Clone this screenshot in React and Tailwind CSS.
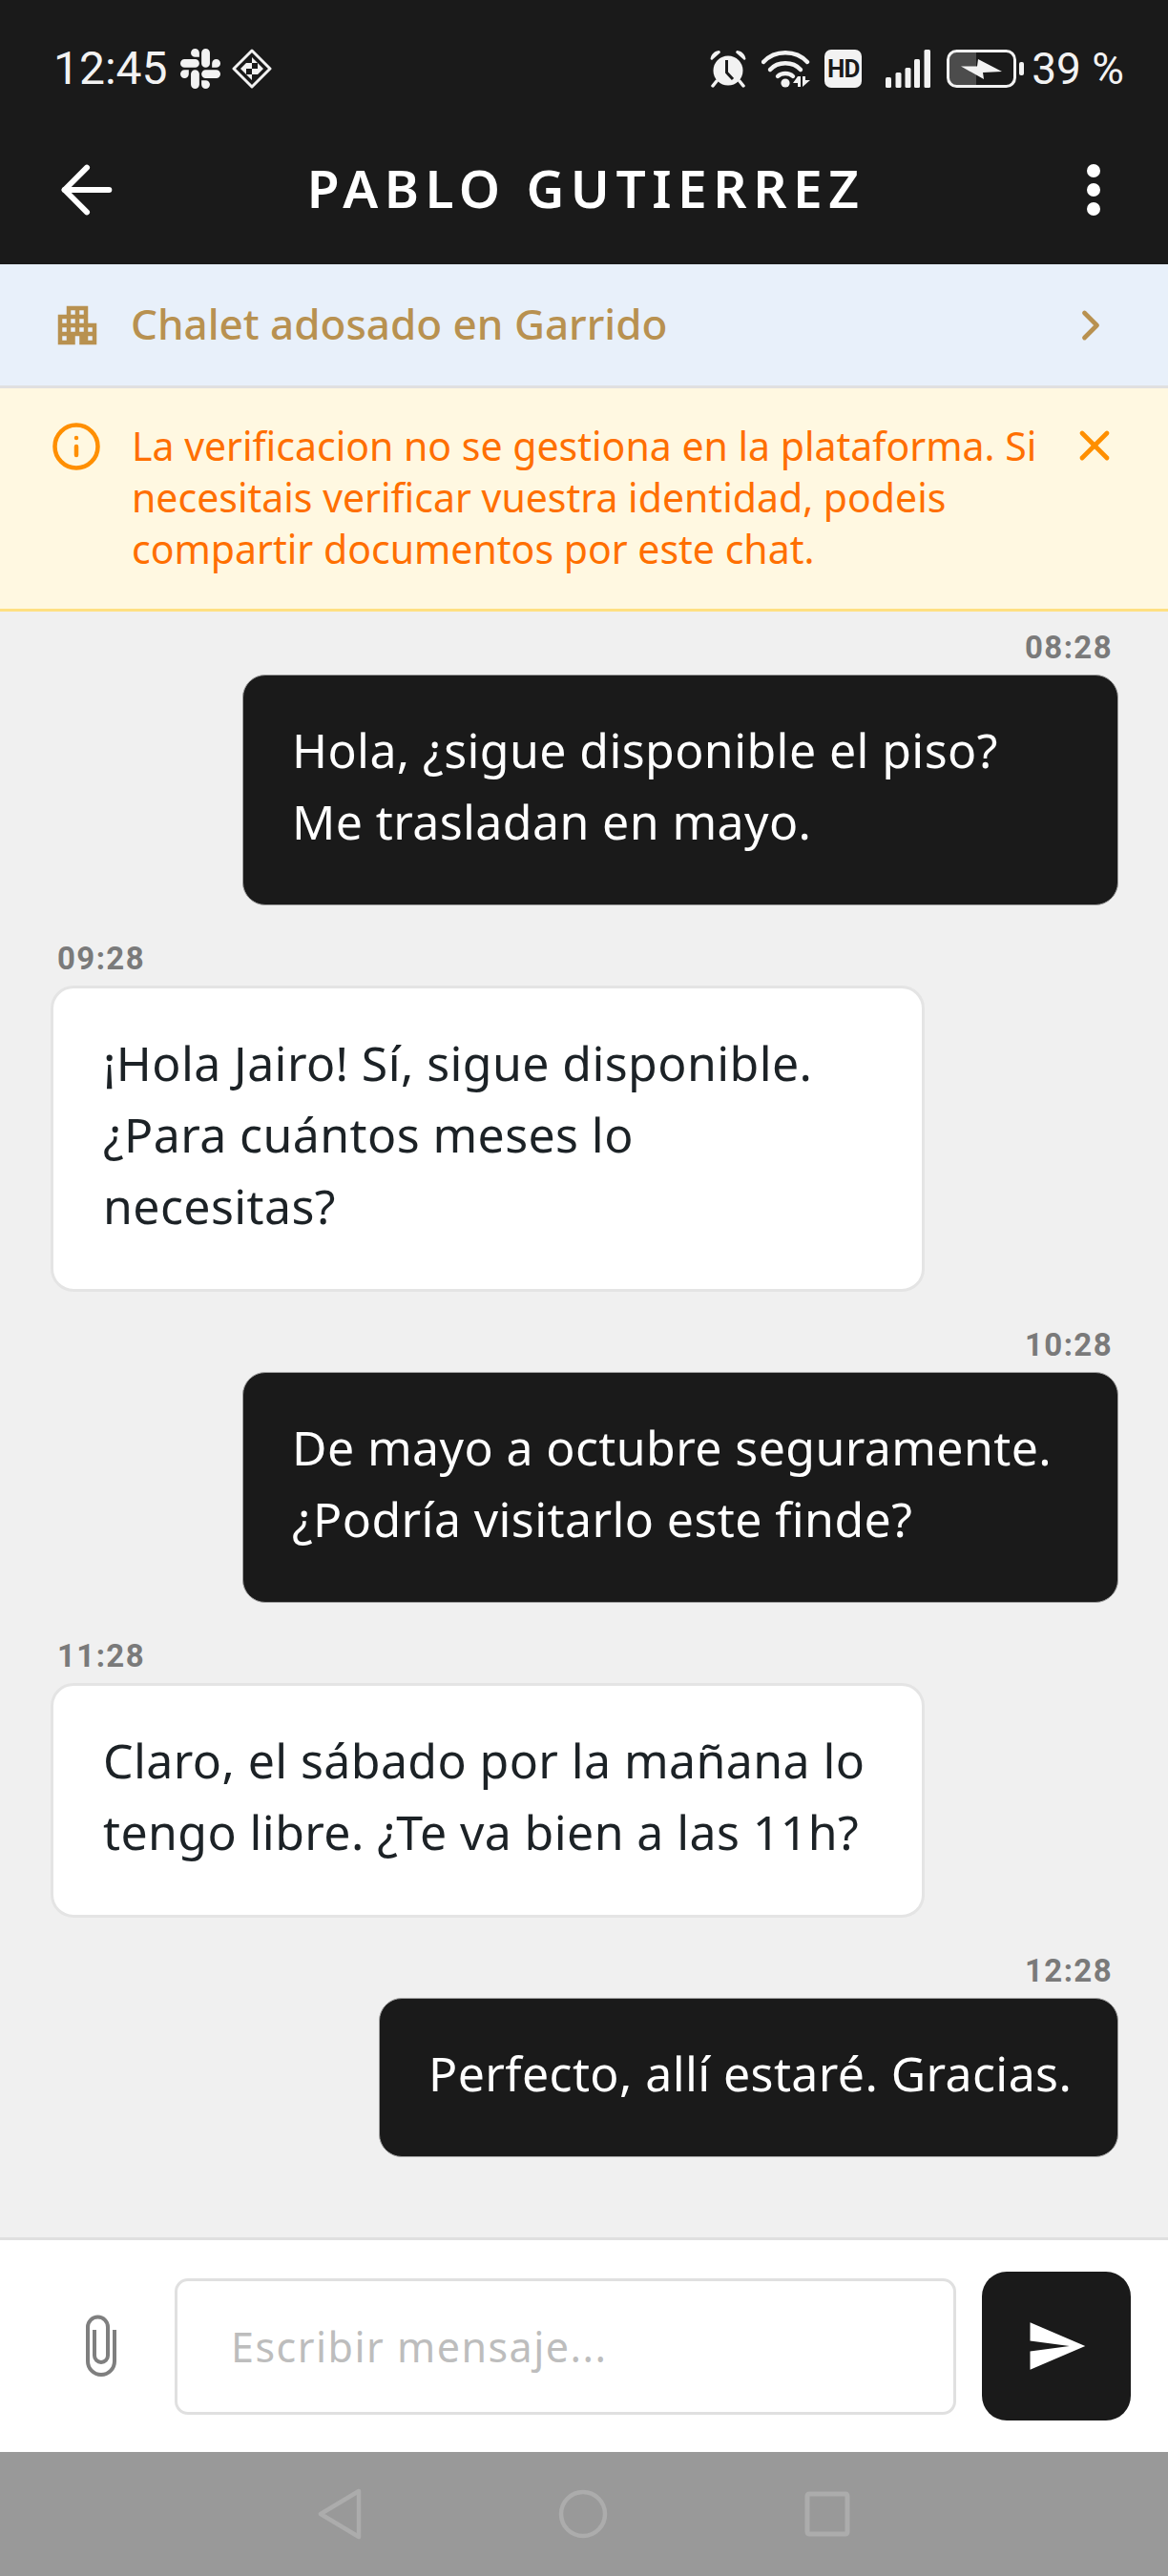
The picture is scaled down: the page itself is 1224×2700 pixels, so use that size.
import React from 'react';
import { ArrowLeft, ChevronRight, Info, X } from 'lucide-react';
import { MdApartment, MdSend } from 'react-icons/md';
import { SiSlack } from 'react-icons/si';

const messages = [
    { time: '08:28', mine: true, width: 'w-[918px]', lines: ['Hola, ¿sigue disponible el piso?', 'Me trasladan en mayo.'] },
    { time: '09:28', mine: false, width: 'w-[916px]', lines: ['¡Hola Jairo! Sí, sigue disponible.', '¿Para cuántos meses lo', 'necesitas?'] },
    { time: '10:28', mine: true, width: 'w-[918px]', lines: ['De mayo a octubre seguramente.', '¿Podría visitarlo este finde?'] },
    { time: '11:28', mine: false, width: 'w-[916px]', lines: ['Claro, el sábado por la mañana lo', 'tengo libre. ¿Te va bien a las 11h?'] },
    { time: '12:28', mine: true, width: 'w-[775px]', lines: ['Perfecto, allí estaré. Gracias.'] },
];

const DiamondIcon = () => (
    <svg width="42" height="42" viewBox="0 0 42 42" className="text-[#f2f2f2]">
        <path d="M21 2 L40 21 L21 40 L2 21 Z" fill="none" stroke="currentColor" strokeWidth="3" strokeLinejoin="round" />
        <path d="M21 9 L27 15 H21 Z M15 15 L21 15 V21 H9 Z M21 21 H33 L27 27 H21 Z M21 27 V33 L15 27 H21 Z M27 15 V21 H33 Z M15 21 V27 L9 21 Z" fill="currentColor" />
    </svg>
);

const AlarmIcon = () => (
    <svg width="40" height="40" viewBox="0 0 40 40" className="text-[#f2f2f2]">
        <circle cx="20" cy="22" r="15.5" fill="currentColor" />
        <path d="M1.5 10 C2 5 6 1 11 1 L12 3 L3 11 Z M38.5 10 C38 5 34 1 29 1 L28 3 L37 11 Z" fill="currentColor" />
        <path d="M8 33 L4 38 M32 33 L36 38" stroke="currentColor" strokeWidth="3.5" strokeLinecap="round" />
        <path d="M18.5 11 V24 L25 31" fill="none" stroke="#1a1a1a" strokeWidth="3" />
    </svg>
);

const WifiIcon = () => (
    <svg width="51" height="40" viewBox="0 0 51 40" className="text-[#f2f2f2]">
        <path d="M2 13 C14 0 36 0 48 13" fill="none" stroke="currentColor" strokeWidth="4.4" strokeLinecap="round" />
        <path d="M9 21 C17 12 33 12 41 21" fill="none" stroke="currentColor" strokeWidth="4.4" strokeLinecap="round" />
        <path d="M17 28 C21 24 29 24 33 28" fill="none" stroke="currentColor" strokeWidth="4.4" strokeLinecap="round" />
        <circle cx="25" cy="35" r="4.6" fill="currentColor" />
        <path d="M38 28 V39 H41 V28 Z M38 28 L33 35 H38 Z M43 28 V39 L51 32 H46 V28 Z" fill="currentColor" />
    </svg>
);

const SignalIcon = () => (
    <svg width="47" height="40" viewBox="0 0 47 40" fill="#f2f2f2">
        <rect x="0" y="29" width="6" height="11" rx="1.5" />
        <rect x="10.5" y="24" width="6" height="16" rx="1.5" />
        <rect x="20.5" y="19" width="6" height="21" rx="1.5" />
        <rect x="30" y="10" width="6" height="30" rx="1.5" />
        <rect x="40.5" y="0" width="6.5" height="40" rx="1.5" />
    </svg>
);

const BatteryIcon = () => (
    <svg width="81" height="40" viewBox="0 0 81 40">
        <path d="M9 3 H31 V37 H9 a6 6 0 0 1 -6 -6 V9 a6 6 0 0 1 6 -6 Z" fill="#4c4c4c" />
        <rect x="1.5" y="1.5" width="70" height="37" rx="9" fill="none" stroke="#f2f2f2" strokeWidth="3" />
        <rect x="76" y="13" width="5" height="14" rx="2" fill="#f2f2f2" />
        <path d="M15 17.5 H32 L33 10 L58 23 L38 24 L39 31 Z" fill="#f2f2f2" />
    </svg>
);

const ClipIcon = () => (
    <svg width="34" height="66" viewBox="0 0 34 66" fill="none" stroke="#7f7f7f" strokeWidth="4">
        <path d="M31 16 V49 A14 14 0 0 1 3 49 V13 A10.5 10.5 0 0 1 24 13 V43 A7 7 0 0 1 10 43 V16" />
    </svg>
);

const Bubble = ({ message }) => (
    <div className={`flex flex-col ${message.mine ? 'items-end' : 'items-start'}`}>
        <span className={`font-['Roboto',sans-serif] font-bold text-[33px] leading-[36px] tracking-[1.4px] text-[#7a7a7a] ${message.mine ? 'mr-[6px]' : 'ml-[7px]'}`}>
            {message.time}
        </span>
        <div
            className={`mt-[10px] rounded-[24px] pb-[49px] pt-[41px] text-[50px] leading-[75px] tracking-[0.4px] ${message.width} ${
                message.mine
                    ? 'bg-[#1a1a1a] border border-[#a0a0a0] pl-[51px] text-white'
                    : 'bg-white border-[3px] border-[#e4e4e4] pl-[52px] text-[#1c2226]'
            }`}
        >
            {message.lines.map((line) => (
                <div key={line} className="whitespace-nowrap">{line}</div>
            ))}
        </div>
    </div>
);

const App = () => {
    return (
        <div className="flex h-[2700px] w-[1224px] flex-col overflow-hidden bg-[#f0f0f0] font-['Noto_Sans',sans-serif]">
            {/* Status bar + header */}
            <div className="h-[277px] bg-[#1a1a1a] text-white">
                <div className="flex h-[144px] items-center justify-between pl-[56px] pr-[46px]">
                    <div className="flex items-center">
                        <span className="w-[119px] font-['Roboto',sans-serif] text-[48px] text-[#f2f2f2]">12:45</span>
                        <SiSlack size={42} className="ml-[14px] text-[#f2f2f2]" />
                        <span className="ml-[12px]"><DiamondIcon /></span>
                    </div>
                    <div className="flex items-center">
                        <AlarmIcon />
                        <span className="ml-[15px]"><WifiIcon /></span>
                        <span className="ml-[15px] flex h-[40px] w-[39px] items-center justify-center rounded-[7px] bg-[#f2f2f2] font-['Roboto',sans-serif] text-[26px] font-bold tracking-[-1px] text-[#1a1a1a]">HD</span>
                        <span className="ml-[25px]"><SignalIcon /></span>
                        <span className="ml-[17px]"><BatteryIcon /></span>
                        <span className="ml-[8px] font-['Roboto',sans-serif] text-[46px] text-[#f2f2f2]">39 %</span>
                    </div>
                </div>
                <div className="flex h-[110px] items-center pl-[51px] pr-[47px]">
                    <div className="flex-1">
                        <ArrowLeft size={80} strokeWidth={1.8} />
                    </div>
                    <span className="-mt-[4px] text-[55px] font-semibold tracking-[6.5px]">PABLO GUTIERREZ</span>
                    <div className="flex flex-1 justify-end">
                        <div className="mr-[24px] flex flex-col gap-[6px]">
                            <span className="h-[14px] w-[14px] rounded-full bg-white" />
                            <span className="h-[14px] w-[14px] rounded-full bg-white" />
                            <span className="h-[14px] w-[14px] rounded-full bg-white" />
                        </div>
                    </div>
                </div>
            </div>

            {/* Property link */}
            <div className="flex h-[130px] items-center border-b-[3px] border-[#e0e0e0] bg-[#e8f0fa] pl-[54px] pr-[55px] text-[#b89150]">
                <MdApartment size={54} />
                <span className="-mt-[4px] ml-[29px] text-[44px] font-medium">Chalet adosado en Garrido</span>
                <ChevronRight size={52} strokeWidth={2.2} className="ml-auto" />
            </div>

            {/* Verification notice */}
            <div className="flex h-[234px] items-start border-b-[3px] border-[#ffe082] bg-[#fff8e1] pl-[53px] pr-[51px] pt-[34px] text-[#ff6f00]">
                <Info size={54} strokeWidth={2} className="shrink-0 text-[#ff8f00]" />
                <p className="-mt-[1px] ml-[31px] text-[41px] leading-[54px]">
                    La verificacion no se gestiona en la plataforma. Si<br />
                    necesitais verificar vuestra identidad, podeis<br />
                    compartir documentos por este chat.
                </p>
                <X size={52} strokeWidth={2.2} className="ml-auto shrink-0 text-[#ff8f00]" />
            </div>

            {/* Messages */}
            <div className="flex flex-1 flex-col gap-[38px] pl-[53px] pr-[52px] pt-[20px]">
                {messages.map((message) => (
                    <Bubble key={message.time} message={message} />
                ))}
            </div>

            {/* Composer */}
            <div className="flex h-[225px] items-center border-t-[3px] border-[#e0e0e0] bg-white pl-[89px] pr-[39px]">
                <ClipIcon />
                <div className="ml-[60px] flex h-[143px] w-[819px] items-center rounded-[14px] border-[3px] border-[#e0e0e0] pl-[56px] pt-[2px] text-[43px] tracking-[1.5px] text-[#bdbdbd]">
                    Escribir mensaje...
                </div>
                <button className="ml-[27px] flex h-[156px] w-[156px] items-center justify-center rounded-[26px] bg-[#1a1a1a] text-white">
                    <MdSend size={66} />
                </button>
            </div>

            {/* Android nav bar */}
            <div className="flex h-[130px] items-center justify-center gap-[206px] bg-[#999999]">
                <svg width="46" height="54" viewBox="0 0 46 54" fill="none" stroke="#acacac" strokeWidth="4.5" strokeLinejoin="round">
                    <path d="M43 3 L3 27 L43 51 Z" />
                </svg>
                <svg width="52" height="52" viewBox="0 0 52 52" fill="none" stroke="#acacac" strokeWidth="4.5">
                    <circle cx="26" cy="26" r="23" />
                </svg>
                <svg width="48" height="48" viewBox="0 0 48 48" fill="none" stroke="#acacac" strokeWidth="5">
                    <rect x="3" y="3" width="42" height="42" rx="2" />
                </svg>
            </div>
        </div>
    );
};

export default App;
